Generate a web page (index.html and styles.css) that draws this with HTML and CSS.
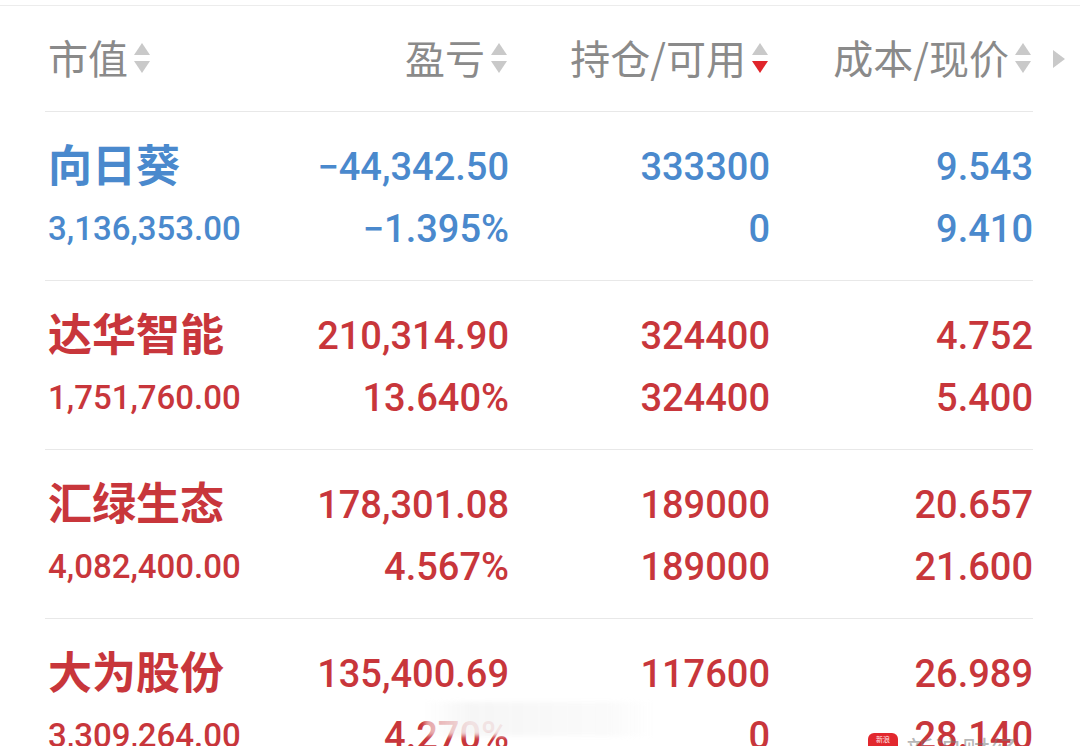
FILE: index.html
```html
<!DOCTYPE html>
<html lang="zh-CN">
<head>
<meta charset="utf-8">
<title>持仓</title>
<link rel="stylesheet" href="styles.css">
</head>
<body>
<div class="page">
  <div class="table">
    <div class="head">
      <div class="hcell h1">市值<svg class="sort" viewBox="0 0 20 34" width="20" height="34"><polygon points="2,14 10,2 18,14" fill="#c9c9c9"/><polygon points="2,20 18,20 10,32" fill="#c9c9c9"/></svg></div>
      <div class="hcell h2">盈亏<svg class="sort" viewBox="0 0 20 34" width="20" height="34"><polygon points="2,14 10,2 18,14" fill="#c9c9c9"/><polygon points="2,20 18,20 10,32" fill="#c9c9c9"/></svg></div>
      <div class="hcell h3">持仓/可用<svg class="sort" viewBox="0 0 20 34" width="20" height="34"><polygon points="2,14 10,2 18,14" fill="#c9c9c9"/><polygon points="2,20 18,20 10,32" fill="#e0252b"/></svg></div>
      <div class="hcell h4">成本/现价<svg class="sort" viewBox="0 0 20 34" width="20" height="34"><polygon points="2,14 10,2 18,14" fill="#c9c9c9"/><polygon points="2,20 18,20 10,32" fill="#c9c9c9"/></svg></div>
      <div class="hcell h5"><svg viewBox="0 0 14 20" width="14" height="20"><polygon points="1,1 13,10 1,19" fill="#c9c9c9"/></svg></div>
    </div>

    <div class="row blue">
      <div class="cell c1"><span class="name">向日葵</span><span class="mv">3,136,353.00</span></div>
      <div class="cell"><span class="num">−44,342.50</span><span class="num">−1.395%</span></div>
      <div class="cell"><span class="num">333300</span><span class="num">0</span></div>
      <div class="cell"><span class="num">9.543</span><span class="num">9.410</span></div>
    </div>

    <div class="row red">
      <div class="cell c1"><span class="name">达华智能</span><span class="mv">1,751,760.00</span></div>
      <div class="cell"><span class="num">210,314.90</span><span class="num">13.640%</span></div>
      <div class="cell"><span class="num">324400</span><span class="num">324400</span></div>
      <div class="cell"><span class="num">4.752</span><span class="num">5.400</span></div>
    </div>

    <div class="row red">
      <div class="cell c1"><span class="name">汇绿生态</span><span class="mv">4,082,400.00</span></div>
      <div class="cell"><span class="num">178,301.08</span><span class="num">4.567%</span></div>
      <div class="cell"><span class="num">189000</span><span class="num">189000</span></div>
      <div class="cell"><span class="num">20.657</span><span class="num">21.600</span></div>
    </div>

    <div class="row red">
      <div class="cell c1"><span class="name">大为股份</span><span class="mv">3,309,264.00</span></div>
      <div class="cell"><span class="num">135,400.69</span><span class="num">4.270%</span></div>
      <div class="cell"><span class="num">117600</span><span class="num">0</span></div>
      <div class="cell"><span class="num">26.989</span><span class="num">28.140</span></div>
    </div>
  </div>

  <div class="wm-blur"></div>
  <div class="wm-logo"><span class="wm-badge">新浪</span><span class="wm-text">新浪财经</span></div>
</div>
</body>
</html>
```

FILE: styles.css
```css
* { box-sizing: border-box; }
html, body {
  margin: 0;
  padding: 0;
  background: #ffffff;
}
body {
  width: 1080px;
  height: 746px;
  overflow: hidden;
  font-family: Roboto, "Noto Sans CJK SC", sans-serif;
}
.page {
  position: relative;
  width: 1080px;
  height: 746px;
  padding-top: 5px;
  overflow: hidden;
}
.page::before {
  content: "";
  display: block;
  height: 1px;
  background: #ececec;
}
.table {
  margin-left: 45px;
  width: 988px;
}
.head {
  display: grid;
  grid-template-columns: 203px 261px 261px 263px auto;
  height: 106px;
  padding-top: 31px;
  align-items: start;
  background: linear-gradient(#e8e8e8, #e8e8e8) no-repeat left bottom / 988px 1px;
}
.hcell {
  display: flex;
  align-items: center;
  height: 40px;
  font-family: "Noto Sans CJK SC", sans-serif;
  font-size: 40px;
  line-height: 40px;
  color: #8a8a8a;
  white-space: nowrap;
}
.hcell .sort {
  margin-left: 4px;
  margin-top: 2px;
  flex: none;
}
.h1 { padding-left: 3px; }
.h2 { justify-content: flex-end; }
.h3 { justify-content: flex-end; }
.h4 { justify-content: flex-end; }
.h5 { padding-left: 19px; padding-top: 3px; }

.row {
  display: grid;
  grid-template-columns: 203px 261px 261px 263px;
  height: 169px;
  padding-top: 24px;
  background: linear-gradient(#e8e8e8, #e8e8e8) no-repeat left bottom / 988px 1px;
}
.row.blue { color: #4a89cd; }
.row.red { color: #c8363b; }
.cell {
  display: flex;
  flex-direction: column;
  align-items: flex-end;
}
.cell.c1 {
  align-items: flex-start;
  padding-left: 3px;
}
.cell span {
  display: block;
  height: 62px;
  line-height: 62px;
  white-space: nowrap;
}
.num {
  font-family: Roboto, sans-serif;
  font-weight: 500;
  font-size: 38px;
}
.cell span.name {
  font-family: "Noto Sans CJK SC", sans-serif;
  font-weight: 700;
  font-size: 44px;
  line-height: 54px;
  padding-bottom: 8px;
}
.mv {
  font-family: Roboto, sans-serif;
  font-weight: 500;
  font-size: 33px;
}

.wm-blur {
  position: absolute;
  left: 425px;
  top: 702px;
  width: 230px;
  height: 34px;
  background: linear-gradient(90deg, rgba(255,255,255,0.55), rgba(245,245,245,0.9) 20%, rgba(250,250,250,0.92) 80%, rgba(255,255,255,0.6));
  filter: blur(2px);
}
.wm-logo {
  position: absolute;
  left: 868px;
  top: 733px;
  display: flex;
  align-items: flex-start;
  gap: 8px;
}
.wm-badge {
  display: block;
  width: 30px;
  height: 22px;
  border-radius: 6px;
  background: #e2282e;
  color: #ffe4e4;
  font-family: "Noto Sans CJK SC", sans-serif;
  font-size: 7px;
  line-height: 12px;
  text-align: center;
}
.wm-text {
  font-family: "Noto Sans CJK SC", sans-serif;
  font-size: 28px;
  line-height: 30px;
  color: rgba(120,120,120,0.55);
  margin-top: 2px;
}
```
